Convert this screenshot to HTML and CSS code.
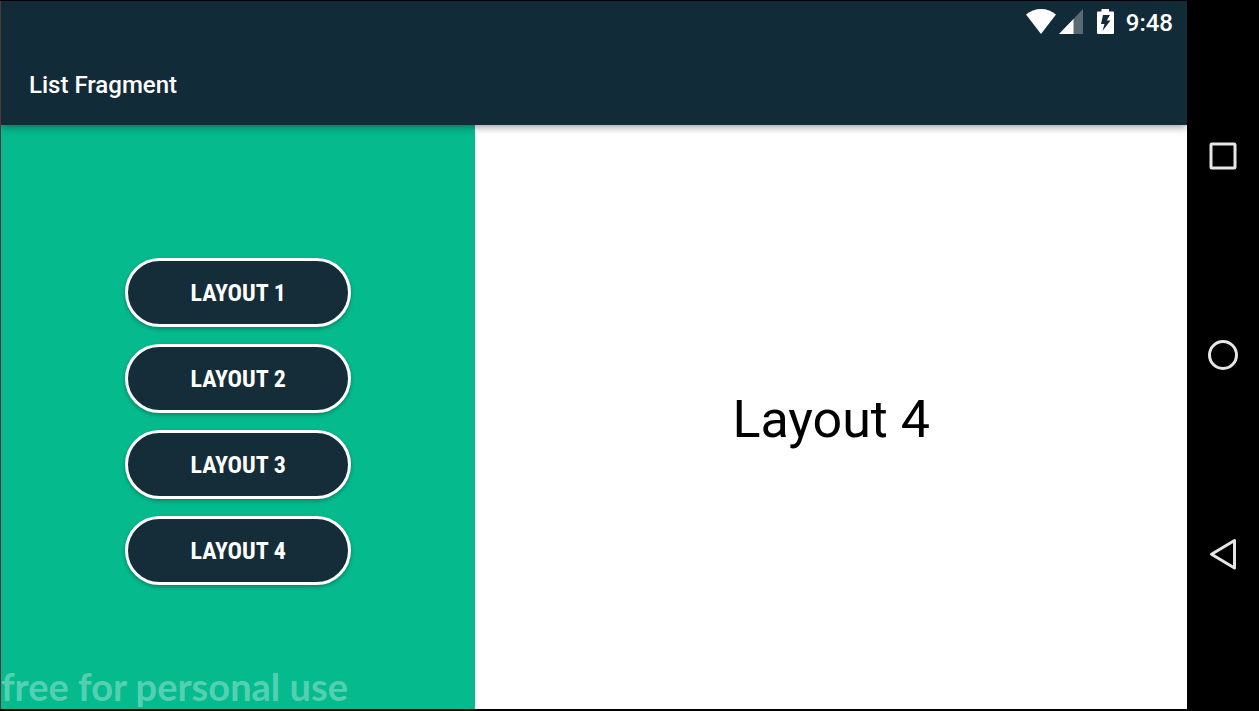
FILE: index.html
```html
<!DOCTYPE html>
<html lang="en">
<head>
<meta charset="utf-8">
<title>List Fragment</title>
<link rel="stylesheet" href="styles.css">
</head>
<body>
<div class="device">
  <div class="screen">
    <header class="top">
      <div class="status">
        <svg class="wifi" width="30" height="25" viewBox="0 0 30 25" aria-label="Wi-Fi"><path d="M0 5.6Q6.500 0 15 0T30 5.600L15 25Z" fill="#fff"/></svg>
        <svg class="signal" width="24" height="25" viewBox="0 0 24 25" aria-label="Signal"><path d="M24 0V25H0Z" fill="#596a73"/><path d="M14.500 10V25H0Z" fill="#fff"/></svg>
        <svg class="battery" width="17" height="25" viewBox="0 0 17 25" aria-label="Charging"><path d="M4.500 0H12V2.500H16Q17 2.500 17 3.500V24Q17 25 16 25H1Q0 25 0 24V3.500Q0 2.500 1 2.500H4.500Z" fill="#fff"/><path d="M13 6H6L4 15H7.500L5.500 22L13.500 11.500H9.800Z" fill="#122b38"/></svg>
        <time class="clock">9:48</time>
      </div>
      <h1 class="title">List Fragment</h1>
    </header>
    <main class="panes">
      <nav class="list" aria-label="Layouts">
        <button type="button" class="choice">LAYOUT 1</button>
        <button type="button" class="choice">LAYOUT 2</button>
        <button type="button" class="choice">LAYOUT 3</button>
        <button type="button" class="choice">LAYOUT 4</button>
      </nav>
      <section class="detail"><p class="name">Layout 4</p></section>
      <p class="watermark">free for personal use</p>
    </main>
  </div>
  <div class="navbar">
    <button type="button" class="key" aria-label="Recent apps"><svg width="32" height="32" viewBox="0 0 32 32"><rect x="4" y="4" width="24" height="24" rx="1"/></svg></button>
    <button type="button" class="key" aria-label="Home"><svg width="32" height="32" viewBox="0 0 32 32"><circle cx="16" cy="16" r="13.500"/></svg></button>
    <button type="button" class="key" aria-label="Back"><svg width="32" height="32" viewBox="0 0 32 32"><path d="M27.500 2.500V30L4.500 16.200Z"/></svg></button>
  </div>
</div>
</body>
</html>
```
FILE: styles.css
```css
* { box-sizing: border-box; }

body {
  margin: 0;
  background: #000;
  font-family: Roboto, "Liberation Sans", sans-serif;
}

.device {
  display: flex;
  min-height: 100vh;
  padding: 1px 0 2px;
}

.screen {
  flex: 1;
  display: flex;
  flex-direction: column;
  border-left: 1px solid #5a3438;
}

.top {
  position: relative;
  z-index: 1;
  background: #122b38;
  color: #fff;
  box-shadow: 0 2px 8px rgba(0, 0, 0, 0.4);
  clip-path: inset(0 0 -12px 0);
}

.status {
  display: flex;
  align-items: center;
  justify-content: flex-end;
  height: 41px;
  padding-right: 14px;
  font-size: 24px;
  font-weight: 500;
}

.signal { margin: 0 14px 0 3px; }
.battery { margin-right: 12px; }
.clock { padding-top: 3px; }

.title {
  margin: 0;
  padding: 3px 28px 0;
  font-size: 24px;
  font-weight: 500;
  line-height: 80px;
}

.panes {
  position: relative;
  flex: 1;
  display: grid;
  grid-template-columns: 2fr 3fr;
}

.list {
  display: flex;
  flex-direction: column;
  align-items: center;
  justify-content: center;
  gap: 17px;
  padding-top: 8px;
  background: #05bb8e;
}

.choice {
  width: 226px;
  height: 69px;
  padding: 2px 0 0;
  border: 3px solid #fff;
  border-radius: 35px;
  background: #152d39;
  color: #fff;
  font-family: "Roboto Condensed", Roboto, sans-serif;
  font-size: 24px;
  font-weight: 700;
  box-shadow: 0 2px 4px rgba(0, 0, 0, 0.3);
}

.detail {
  display: flex;
  align-items: center;
  justify-content: center;
  padding-top: 4px;
  background: #fff;
}

.name {
  margin: 0;
  color: #000;
  font-size: 52px;
}

.watermark {
  position: absolute;
  left: 0;
  bottom: 0;
  margin: 0;
  color: rgba(255, 255, 255, 0.32);
  font-family: Lato, sans-serif;
  font-size: 38px;
  font-weight: 700;
  line-height: 46px;
}

.navbar {
  display: flex;
  flex-direction: column;
  align-items: center;
  justify-content: center;
  gap: 151px;
  width: 72px;
}

.key {
  display: flex;
  align-items: center;
  justify-content: center;
  width: 48px;
  height: 48px;
  padding: 0;
  border: 0;
  background: none;
}

.key svg {
  fill: none;
  stroke: #e6e6e6;
  stroke-width: 3px;
  stroke-linejoin: round;
}
```
